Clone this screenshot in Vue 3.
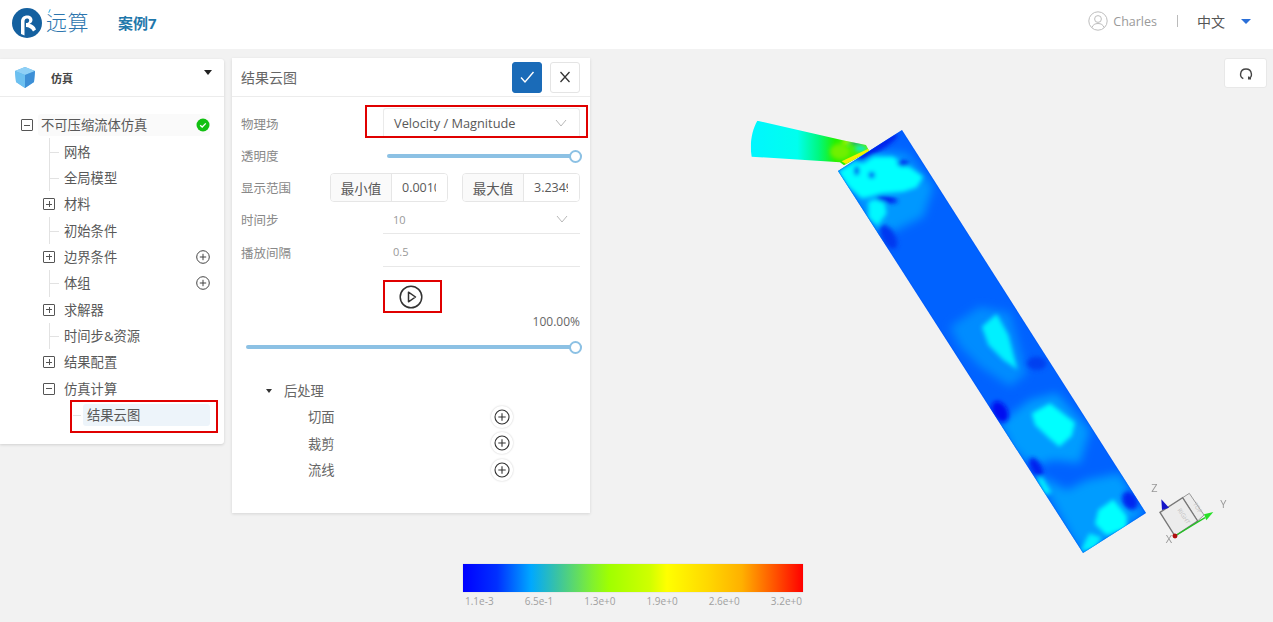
<script setup>
const treeRows = [
  { label: '不可压缩流体仿真', level: 0, toggle: 'minus', done: true },
  { label: '网格', level: 1 },
  { label: '全局模型', level: 1 },
  { label: '材料', level: 1, toggle: 'plus' },
  { label: '初始条件', level: 1 },
  { label: '边界条件', level: 1, toggle: 'plus', add: true },
  { label: '体组', level: 1, add: true },
  { label: '求解器', level: 1, toggle: 'plus' },
  { label: '时间步&资源', level: 1 },
  { label: '结果配置', level: 1, toggle: 'plus' },
  { label: '仿真计算', level: 1, toggle: 'minus' },
  { label: '结果云图', level: 2, selected: true },
]

const postItems = ['切面', '裁剪', '流线']
const legendTicks = ['1.1e-3', '6.5e-1', '1.3e+0', '1.9e+0', '2.6e+0', '3.2e+0']

// contour patches on the long duct, in a 3x local space (see the group transform)
const halos = [
  { points: '40,120 140,60 260,70 340,170 310,260 210,310 180,330 100,200', fill: '#0098ff' },
  { points: '390,590 480,530 570,550 620,730 570,770 480,710 420,650', fill: '#008cff' },
  { points: '540,880 630,810 710,790 810,900 780,1000 700,990 640,1010 580,960', fill: '#009cff' },
  { points: '650,1030 740,1080 800,1050 900,1030 970,1150 800,1275 760,1230', fill: '#009cff' },
]
const hotSpots = [
  { points: '55,125 105,95 130,100 160,80 220,80 245,100 275,115 310,140 290,172 250,185 185,190 150,200 125,205 85,170', fill: '#00ffff' },
  { points: '145,215 190,200 200,250 172,288 145,262', fill: '#00f8ff' },
  { points: '485,590 530,552 565,615 592,718 550,690 505,645', fill: '#00f0ff' },
  { points: '635,850 690,820 765,878 755,918 718,950 688,925 645,885', fill: '#00ffff' },
  { points: '648,1042 668,1042 695,1088 675,1095', fill: '#00f0ff' },
  { points: '835,1140 880,1108 920,1158 920,1195 860,1216 825,1182', fill: '#00ffff' },
  { points: '780,1265 808,1210 845,1222 825,1255', fill: '#00f0ff' },
]
const coldSpots = [
  { cx: 170, cy: 52, rx: 75, ry: 14, rot: -32, fill: '#0020ec' },
  { cx: 250, cy: 100, rx: 18, ry: 10, rot: 0, fill: '#0030f0' },
  { cx: 155, cy: 135, rx: 9, ry: 10, rot: 0, fill: '#0048f4' },
  { cx: 110, cy: 122, rx: 7, ry: 14, rot: 0, fill: '#0030f0' },
  { cx: 200, cy: 208, rx: 34, ry: 10, rot: 10, fill: '#0024ee' },
  { cx: 205, cy: 320, rx: 20, ry: 40, rot: -30, fill: '#0038f0' },
  { cx: 540, cy: 845, rx: 22, ry: 34, rot: -30, fill: '#0010f0' },
  { cx: 648, cy: 1012, rx: 16, ry: 32, rot: -30, fill: '#0024f0' },
  { cx: 650, cy: 700, rx: 30, ry: 20, rot: 0, fill: '#0040f0' },
  { cx: 930, cy: 1112, rx: 22, ry: 30, rot: -30, fill: '#0028f0' },
]
</script>

<template>
  <div class="page">
    <header class="topbar">
      <div class="brand">
        <svg class="logo" width="32" height="32" viewBox="0 0 32 32">
          <circle cx="16" cy="16" r="15" fill="#14609f" />
          <path d="M10 27V14.5C10 10.5 13 8.5 16 8.5C19.5 8.5 21.5 10.5 21.5 13C21.5 15 20 16.2 18.5 16.8C21.5 17.2 24 19.500 25 22.500L22 24.500C20.500 21.500 18 20 15 20V16H16C17.500 16 18.200 14.500 18.200 13.300C18.200 12 17.200 11.500 16 11.500C14.500 11.500 13.500 12.500 13.500 14.500V28.500Z" fill="#fff" />
        </svg>
        <span class="brand-name">远算</span>
        <span class="case-name">案例7</span>
      </div>
      <div class="account">
        <svg width="20" height="20" viewBox="0 0 20 20" fill="none" stroke="#bdbdbd" stroke-width="1">
          <circle cx="10" cy="10" r="9.2" />
          <circle cx="10" cy="8" r="3.4" />
          <path d="M4 16.500C4.800 13.800 7 12.500 10 12.500C13 12.500 15.200 13.800 16 16.500" />
        </svg>
        <span class="user-name">Charles</span>
        <span class="divider"></span>
        <span class="lang">中文</span>
        <span class="lang-caret"></span>
      </div>
    </header>

    <main class="workspace">
      <svg class="viewport" width="1273" height="573" viewBox="0 49 1273 573">
        <defs>
          <clipPath id="duct-clip">
            <polygon points="902,130 838,171 1083,553 1146,513" />
          </clipPath>
          <clipPath id="nozzle-clip">
            <path d="M52 32C36 60 28 100 35 140L300 157L312 166L388 124L378 105L315 92Z" />
          </clipPath>
          <filter id="soft" x="-50%" y="-50%" width="200%" height="200%">
            <feGaussianBlur stdDeviation="14" />
          </filter>
          <filter id="softer" x="-50%" y="-50%" width="200%" height="200%">
            <feGaussianBlur stdDeviation="6" />
          </filter>
          <linearGradient id="nozzle-fill" x1="30" y1="0" x2="385" y2="0" gradientUnits="userSpaceOnUse">
            <stop offset="0" stop-color="#00f6ff" />
            <stop offset="0.4" stop-color="#00ffee" />
            <stop offset="0.58" stop-color="#00f880" />
            <stop offset="0.72" stop-color="#20f000" />
            <stop offset="1" stop-color="#60f000" />
          </linearGradient>
        </defs>

        <rect x="0" y="49" width="1273" height="573" fill="#f2f2f2" />

        <g transform="translate(740 110) scale(0.3333)">
          <g clip-path="url(#nozzle-clip)">
            <rect x="20" y="20" width="380" height="150" fill="url(#nozzle-fill)" />
            <g filter="url(#softer)">
              <ellipse cx="300" cy="125" rx="30" ry="24" fill="#70f000" />
              <ellipse cx="318" cy="94" rx="10" ry="5" fill="#f0f000" />
              <ellipse cx="362" cy="116" rx="18" ry="8" fill="#00e8f0" />
              <ellipse cx="348" cy="97" rx="20" ry="4" fill="#0060f0" />
            </g>
            <path d="M305 154L385 116L388 124L318 162Z" fill="#f4f000" />
          </g>
        </g>

        <g clip-path="url(#duct-clip)">
          <rect x="820" y="120" width="340" height="440" fill="#0062ff" />
          <g transform="translate(820 130) scale(0.3333)">
            <g filter="url(#soft)">
              <polygon v-for="(p, i) in halos" :key="i" :points="p.points" :fill="p.fill" />
            </g>
            <g filter="url(#softer)">
              <polygon v-for="(p, i) in hotSpots" :key="i" :points="p.points" :fill="p.fill" />
              <ellipse
                v-for="(b, i) in coldSpots"
                :key="i"
                :cx="b.cx"
                :cy="b.cy"
                :rx="b.rx"
                :ry="b.ry"
                :fill="b.fill"
                :transform="`rotate(${b.rot} ${b.cx} ${b.cy})`"
              />
            </g>
          </g>
          <polygon points="902,130 838,171 1083,553 1146,513" fill="none" stroke="#0040e8" stroke-width="2" opacity="0.2" />
        </g>

        <g class="triad" transform="translate(1060 460) scale(0.3333)">
          <polygon points="368,113 388,100 432,165 413,183" fill="#ececec" stroke="#999" stroke-width="3" />
          <polygon points="300,157 368,113 413,183 345,228" fill="#ececec" stroke="#777" stroke-width="4" />
          <text class="face-label" x="0" y="0" transform="translate(352 150) rotate(57)">RIGHT</text>
          <text class="face-label" x="0" y="0" transform="translate(398 132) rotate(57)">TOP</text>
          <line x1="345" y1="228" x2="435" y2="173" stroke="#22c522" stroke-width="4" />
          <polygon points="460,156 432,163 439,181" fill="#28e028" />
          <polygon points="304,118 327,143 306,150" fill="#1414c8" />
          <circle cx="345" cy="228" r="7.500" fill="#b01010" />
          <text class="axis-label" x="274" y="96">Z</text>
          <text class="axis-label" x="481" y="144">Y</text>
          <text class="axis-label" x="317" y="248">X</text>
        </g>
      </svg>

      <aside class="tree-panel">
        <div class="tree-head">
          <svg width="20" height="21" viewBox="0 0 20 21">
            <polygon points="10,0 20,4 19,15 10,21 1,15 0,4" fill="#5db3ec" />
            <polygon points="10,0 20,4 10,8 0,4" fill="#8fd0f6" />
            <polygon points="10,8 20,4 19,15 10,21" fill="#3d8fd6" />
            <polygon points="0,4 10,8 10,21 1,15" fill="#6cc0f0" />
          </svg>
          <span class="tree-title">仿真</span>
          <span class="head-caret"></span>
        </div>
        <ul class="tree">
          <li
            v-for="row in treeRows"
            :key="row.label"
            class="tree-row"
            :class="[`level-${row.level}`, { leaf: !row.toggle && row.level === 1 }]"
          >
            <span v-if="row.toggle" class="toggle" :class="row.toggle"></span>
            <span class="tree-label" :class="{ selected: row.selected, root: row.level === 0 }">
              {{ row.label }}
              <svg v-if="row.done" class="done" width="14" height="14" viewBox="0 0 14 14">
                <circle cx="7" cy="7" r="6.500" fill="#12c012" />
                <path d="M4.200 7.200L6.200 9L9.800 5.400" fill="none" stroke="#fff" stroke-width="1.300" />
              </svg>
            </span>
            <svg v-if="row.add" class="row-add" width="14" height="14" viewBox="0 0 14 14" fill="none" stroke="#444" stroke-width="1">
              <circle cx="7" cy="7" r="6.300" />
              <path d="M7 3.800V10.200M3.800 7H10.200" />
            </svg>
          </li>
        </ul>
        <div class="mark tree-mark"></div>
      </aside>

      <section class="form-panel">
        <div class="form-head">
          <span class="form-title">结果云图</span>
          <button class="btn-confirm">
            <svg width="16" height="14" viewBox="0 0 16 14" fill="none" stroke="#fff" stroke-width="1.400">
              <path d="M2 7.500L6 12L14.500 2" />
            </svg>
          </button>
          <button class="btn-close">
            <svg width="12" height="12" viewBox="0 0 12 12" fill="none" stroke="#333" stroke-width="1.300">
              <path d="M1.500 1L10.500 11M10.500 1L1.500 11" />
            </svg>
          </button>
        </div>

        <div class="form">
          <div class="form-row">
            <label>物理场</label>
            <div class="select">
              <span>Velocity / Magnitude</span>
              <svg width="12" height="8" viewBox="0 0 12 8" fill="none" stroke="#b8b8b8" stroke-width="1">
                <path d="M1 1L6 7L11 1" />
              </svg>
            </div>
          </div>
          <div class="form-row">
            <label>透明度</label>
            <div class="slider short"><span class="thumb"></span></div>
          </div>
          <div class="form-row">
            <label>显示范围</label>
            <div class="range">
              <div class="input-group">
                <span class="addon">最小值</span>
                <input value="0.00106" readonly />
              </div>
              <div class="input-group">
                <span class="addon">最大值</span>
                <input value="3.2349" readonly />
              </div>
            </div>
          </div>
          <div class="form-row">
            <label>时间步</label>
            <div class="line-field">
              <span>10</span>
              <svg width="12" height="8" viewBox="0 0 12 8" fill="none" stroke="#b8b8b8" stroke-width="1">
                <path d="M1 1L6 7L11 1" />
              </svg>
            </div>
          </div>
          <div class="form-row">
            <label>播放间隔</label>
            <div class="line-field"><span>0.5</span></div>
          </div>
        </div>

        <div class="play-row">
          <svg width="24" height="24" viewBox="0 0 24 24" fill="none" stroke="#333" stroke-width="1.500">
            <circle cx="12" cy="12" r="10.800" />
            <path d="M9.500 7.200V16.800L16.500 12Z" stroke-linejoin="round" />
          </svg>
        </div>
        <div class="percent">100.00%</div>
        <div class="slider long"><span class="thumb"></span></div>

        <div class="post">
          <div class="post-head"><span class="post-caret"></span>后处理</div>
          <div v-for="item in postItems" :key="item" class="post-row">
            <span>{{ item }}</span>
            <span class="post-add">
              <svg width="16" height="16" viewBox="0 0 16 16" fill="none" stroke="#333" stroke-width="1.100">
                <circle cx="8" cy="8" r="7" />
                <path d="M8 4.300V11.700M4.300 8H11.700" />
              </svg>
            </span>
          </div>
        </div>

        <div class="mark select-mark"></div>
        <div class="mark play-mark"></div>
      </section>

      <button class="btn-reset">
        <svg width="14" height="13" viewBox="0 0 14 13" fill="none" stroke="#444" stroke-width="1.400">
          <path d="M4.300 11.600C2.300 10.700 1.300 9 1.600 6.800C2 4 4.300 2 7 2C9.700 2 12 4 12.400 6.800C12.700 9 11.700 10.700 9.700 11.600M9.700 9.600V11.800H12" />
        </svg>
      </button>

      <div class="legend">
        <div class="legend-bar"></div>
        <div class="legend-ticks">
          <span v-for="tick in legendTicks" :key="tick">{{ tick }}</span>
        </div>
      </div>
    </main>
  </div>
</template>

<style>
html,
body {
  margin: 0;
  background: #f2f2f2;
}
</style>

<style scoped>
.page {
  width: 1273px;
  height: 622px;
  overflow: hidden;
  display: flex;
  flex-direction: column;
  font-family: "Open Sans", "Noto Sans CJK SC", sans-serif;
  color: #595959;
  font-size: 13.300px;
}

.topbar {
  height: 49px;
  flex: none;
  background: #fff;
  display: flex;
  align-items: center;
  justify-content: space-between;
  padding: 0 22px 7px 11px;
  box-sizing: border-box;
}

.brand {
  display: flex;
  align-items: center;
}

.logo {
  margin-top: 3px;
}

.brand-name {
  position: relative;
  margin-left: 3px;
  font-size: 21px;
  color: #2c75ae;
  font-family: "Noto Sans CJK SC", sans-serif;
  font-weight: 300;
  letter-spacing: 0.5px;
}

.brand-name::before {
  content: "";
  position: absolute;
  left: 3px;
  top: 3px;
  width: 1px;
  height: 4px;
  background: #45b4e8;
  transform: rotate(25deg);
}

.case-name {
  margin: 3px 0 0 29px;
  font-weight: 700;
  color: #1f78ab;
  font-size: 15px;
}

.account {
  display: flex;
  align-items: center;
}

.user-name {
  margin-left: 5px;
  font-size: 12.500px;
  color: #9a9a9a;
}

.divider {
  width: 1px;
  height: 12px;
  background: #bbb;
  margin: 0 19px 0 20px;
}

.lang {
  color: #555;
  font-size: 14px;
}

.lang-caret {
  margin-left: 16px;
  border-left: 5px solid transparent;
  border-right: 5px solid transparent;
  border-top: 5px solid #2a6fd8;
}

.workspace {
  position: relative;
  flex: 1;
  display: flex;
  align-items: flex-start;
  gap: 8px;
  padding-top: 10px;
}

.viewport {
  position: absolute;
  left: 0;
  top: 0;
}

.tree-panel {
  position: relative;
  width: 224px;
  height: 385px;
  background: #fff;
  border-radius: 0 3px 3px 0;
  box-shadow: 0 1px 3px rgba(0, 0, 0, 0.14);
}

.tree-head {
  height: 37px;
  display: flex;
  align-items: center;
  padding: 0 12px 0 15px;
  border-bottom: 1px solid #ececec;
}

.tree-title {
  margin-left: 16px;
  font-size: 11px;
  font-weight: 700;
  color: #444;
}

.head-caret {
  margin-left: auto;
  margin-bottom: 10px;
  border-left: 4px solid transparent;
  border-right: 4px solid transparent;
  border-top: 5px solid #222;
}

.tree {
  list-style: none;
  margin: 0;
  padding: 15px 14px 0 0;
}

.tree-row {
  position: relative;
  height: 26.360px;
  display: flex;
  align-items: center;
}

.level-0 {
  padding-left: 21px;
}

.level-1 {
  padding-left: 43px;
}

.level-2 {
  padding-left: 83px;
}

.leaf {
  padding-left: 64px;
}

.leaf::before {
  content: "";
  position: absolute;
  left: 49px;
  top: 0;
  bottom: 0;
  width: 1px;
  background: #e2e2e2;
}

.leaf::after,
.level-2::after {
  content: "";
  position: absolute;
  left: 49px;
  top: 50%;
  width: 10px;
  height: 1px;
  background: #e2e2e2;
}

.level-2::after {
  left: 73px;
  width: 8px;
}

.toggle {
  position: relative;
  flex: none;
  width: 10px;
  height: 10px;
  border: 1px solid #555;
  border-radius: 1px;
  margin-right: 9px;
}

.level-0 .toggle {
  margin-right: 8px;
}

.toggle::before {
  content: "";
  position: absolute;
  left: 2px;
  right: 2px;
  top: 4.500px;
  height: 1px;
  background: #555;
}

.toggle.plus::after {
  content: "";
  position: absolute;
  top: 2px;
  bottom: 2px;
  left: 4.500px;
  width: 1px;
  background: #555;
}

.tree-label {
  line-height: 22px;
}

.tree-label.root {
  flex: 1;
  display: flex;
  align-items: center;
  justify-content: space-between;
  background: #fafafa;
  margin-left: -3px;
  padding-left: 3px;
  border-radius: 3px;
}

.tree-label.selected {
  flex: 1;
  background: #edf4fa;
  border-radius: 3px;
  padding-left: 4px;
}

.row-add {
  margin-left: auto;
}

.form-panel {
  position: relative;
  width: 358px;
  height: 455px;
  margin-top: -1px;
  background: #fff;
  box-shadow: 0 1px 3px rgba(0, 0, 0, 0.12);
  box-sizing: border-box;
  padding: 0 10px 0 9px;
}

.form-head {
  height: 38px;
  margin: 0 -10px 0 -9px;
  padding: 0 10px 0 9px;
  display: flex;
  align-items: center;
  gap: 8px;
  border-bottom: 1px solid #ececec;
}

.form-title {
  flex: 1;
  color: #666;
  font-size: 14px;
}

.form-head button {
  width: 30px;
  height: 31px;
  padding: 0;
  border-radius: 3px;
  display: flex;
  align-items: center;
  justify-content: center;
}

.btn-confirm {
  background: #1a6bb8;
  border: 1px solid #1a6bb8;
}

.btn-close {
  background: #fff;
  border: 1px solid #e4e4e4;
}

.form {
  padding-top: 10px;
}

.form-row {
  height: 32.250px;
  display: flex;
  align-items: center;
  font-size: 12.800px;
  color: #888;
}

.form-row label {
  width: 89px;
  flex: none;
  font-size: 12.500px;
}

.select {
  flex: 1;
  height: 29px;
  display: flex;
  align-items: center;
  justify-content: space-between;
  padding: 0 12px 0 10px;
  margin-left: 53px;
  color: #595959;
  border: 1px solid #eaeaea;
  border-bottom-color: transparent;
  border-radius: 3px;
}

.slider {
  position: relative;
  height: 4px;
  border-radius: 2px;
  background: #8cc1e4;
}

.slider.short {
  flex: 1;
  margin: 2px -2px 0 57px;
}

.slider.long {
  margin: 15px -2px 0 5px;
}

.thumb {
  position: absolute;
  right: 0;
  top: -4.500px;
  width: 9px;
  height: 9px;
  background: #fff;
  border: 2px solid #8cc1e4;
  border-radius: 50%;
}

.range {
  flex: 1;
  display: flex;
  justify-content: space-between;
}

.input-group {
  width: 118px;
  height: 29px;
  box-sizing: border-box;
  display: flex;
  border: 1px solid #e6e6e6;
  border-radius: 4px;
  overflow: hidden;
}

.addon {
  width: 60px;
  flex: none;
  display: flex;
  align-items: center;
  justify-content: center;
  background: #fafafa;
  border-right: 1px solid #e6e6e6;
  color: #595959;
  font-size: 13.500px;
}

.input-group input {
  width: 100%;
  min-width: 0;
  border: 0;
  outline: 0;
  padding: 0 11px 0 10px;
  box-sizing: border-box;
  font: 12.500px "Open Sans", sans-serif;
  color: #595959;
  background: #fff;
}

.line-field {
  flex: 1;
  height: 28px;
  margin-left: 53px;
  display: flex;
  align-items: center;
  justify-content: space-between;
  padding: 0 12px 0 10px;
  border-bottom: 1px solid #e8e8e8;
  font-size: 11px;
  color: #999;
}

.play-row {
  display: flex;
  justify-content: flex-start;
  padding: 17px 0 0 158px;
}

.percent {
  margin-top: 5px;
  text-align: right;
  font-size: 12px;
  line-height: 16px;
  color: #666;
}

.post {
  margin-top: 29px;
}

.post-head {
  display: flex;
  align-items: center;
  height: 25px;
  padding-left: 25px;
  font-size: 13.300px;
  color: #666;
}

.post-caret {
  margin-right: 12px;
  border-left: 3.500px solid transparent;
  border-right: 3.500px solid transparent;
  border-top: 4px solid #333;
}

.post-row {
  height: 26.500px;
  display: flex;
  align-items: center;
  justify-content: space-between;
  padding-left: 67px;
  width: 272px;
  box-sizing: border-box;
  font-size: 13.300px;
  color: #666;
}

.post-add {
  width: 22px;
  height: 22px;
  border-radius: 50%;
  display: flex;
  align-items: center;
  justify-content: center;
  box-shadow: 0 0 2px rgba(0, 0, 0, 0.22);
}

.mark {
  position: absolute;
  box-sizing: border-box;
  border: 2px solid #e00000;
  pointer-events: none;
}

.tree-mark {
  left: 70px;
  top: 341px;
  width: 148px;
  height: 33px;
}

.select-mark {
  left: 133px;
  top: 47px;
  width: 223px;
  height: 33px;
}

.play-mark {
  left: 151px;
  top: 222px;
  width: 59px;
  height: 33px;
}

.btn-reset {
  position: absolute;
  right: 6px;
  top: 9px;
  width: 43px;
  height: 30px;
  padding: 0;
  background: #fff;
  border: 1px solid #e8e8e8;
  border-radius: 3px;
  display: flex;
  align-items: center;
  justify-content: center;
}

.legend {
  position: absolute;
  left: 463px;
  top: 515px;
  width: 340px;
}

.legend-bar {
  height: 28px;
  background: linear-gradient(90deg, #0000ff 0%, #0030ff 10%, #00a8ff 20%, #3cc4a0 28%, #80f030 38%, #a0ff00 43%, #d0ff00 55%, #ffff00 60%, #ffd800 72%, #ffb000 82%, #ff5000 92%, #ff0000 100%);
  box-shadow: 0 0 1px #bbb;
}

.legend-ticks {
  display: flex;
  justify-content: space-between;
  padding: 2px 1px 0 2px;
  font-size: 10px;
  line-height: 14px;
  color: #a0a0a0;
}

.face-label {
  font-size: 18px;
  font-family: "Open Sans", sans-serif;
  fill: #bdbdbd;
}

.axis-label {
  font-size: 33px;
  font-family: "Open Sans", sans-serif;
  fill: #999;
}
</style>
